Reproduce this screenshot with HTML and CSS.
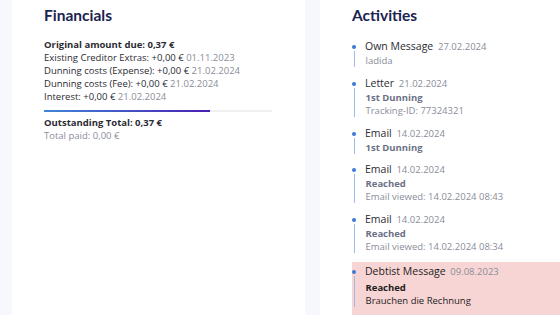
FILE: index.html
```html
<!DOCTYPE html>
<html lang="en">
<head>
    <meta charset="UTF-8">
    <title>Claim Overview</title>
    <link rel="stylesheet" href="styles.css">
</head>
<body>
    <div class="layout">
        <section class="card financials">
            <h2>Financials</h2>
            <div class="fin-list">
                <p class="strong">Original amount due: 0,37 €</p>
                <p>Existing Creditor Extras: +0,00 € <span class="date">01.11.2023</span></p>
                <p>Dunning costs (Expense): +0,00 € <span class="date">21.02.2024</span></p>
                <p>Dunning costs (Fee): +0,00 € <span class="date">21.02.2024</span></p>
                <p>Interest: +0,00 € <span class="date">21.02.2024</span></p>
            </div>
            <div class="progress"><div class="progress-bar" style="width: 73%"></div></div>
            <p class="strong">Outstanding Total: 0,37 €</p>
            <p class="muted">Total paid: 0,00 €</p>
        </section>
        <section class="card activities">
            <h2>Activities</h2>
            <ul class="timeline">
                <li class="item">
                    <div class="title">Own Message <span class="date">27.02.2024</span></div>
                    <div class="body">
                        <div class="sub">ladida</div>
                    </div>
                </li>
                <li class="item">
                    <div class="title">Letter <span class="date">21.02.2024</span></div>
                    <div class="body">
                        <div class="label">1st Dunning</div>
                        <div class="sub">Tracking-ID: 77324321</div>
                    </div>
                </li>
                <li class="item short">
                    <div class="title">Email <span class="date">14.02.2024</span></div>
                    <div class="body">
                        <div class="label">1st Dunning</div>
                    </div>
                </li>
                <li class="item">
                    <div class="title">Email <span class="date">14.02.2024</span></div>
                    <div class="body">
                        <div class="label">Reached</div>
                        <div class="sub">Email viewed: 14.02.2024 08:43</div>
                    </div>
                </li>
                <li class="item">
                    <div class="title">Email <span class="date">14.02.2024</span></div>
                    <div class="body">
                        <div class="label">Reached</div>
                        <div class="sub">Email viewed: 14.02.2024 08:34</div>
                    </div>
                </li>
                <li class="item highlight">
                    <div class="title">Debtist Message <span class="date">09.08.2023</span></div>
                    <div class="body">
                        <div class="label">Reached</div>
                        <div class="sub">Brauchen die Rechnung</div>
                    </div>
                </li>
            </ul>
        </section>
    </div>
</body>
</html>
```
FILE: styles.css
```css
body {
    margin: 0;
    padding: 0;
    background-color: #f6f8fc;
    font-family: "Open Sans", Arial, sans-serif;
    color: #2b2b33;
    overflow: hidden;
}
p {
    margin: 0;
}
.layout {
    display: grid;
    grid-template-columns: 293px 1fr;
    gap: 15px;
    padding-left: 12px;
    height: 315px;
}
.card {
    background-color: #fff;
    padding-left: 32px;
}
h2 {
    font-family: Lato, sans-serif;
    font-weight: 700;
    font-size: 15.5px;
    color: #1b2450;
    margin: 5px 0 13px;
    line-height: 20px;
}
.financials p {
    font-size: 9.5px;
    line-height: 13px;
}
.strong {
    font-weight: 700;
}
.date,
.muted {
    color: #8a8d99;
}
.progress {
    height: 2px;
    width: 228px;
    background-color: #f0f0f3;
    margin: 7px 0 4px;
}
.progress-bar {
    height: 100%;
    background: linear-gradient(90deg, #3f86d8, #4a1fb3);
}
.timeline {
    list-style: none;
    margin: 0;
    padding: 0;
    position: relative;
    top: 1px;
}
.item {
    position: relative;
    padding-bottom: 9px;
}
.item.short {
    padding-bottom: 8px;
}
.item::before {
    content: "";
    position: absolute;
    left: 0;
    top: 5.5px;
    width: 4px;
    height: 4px;
    border-radius: 50%;
    background-color: #3c7bd4;
}
.title {
    font-size: 10.5px;
    line-height: 15px;
    padding-left: 13px;
}
.title .date {
    font-size: 9.5px;
    margin-left: 2px;
}
/* line starts right under the dot */
.body {
    margin-left: 1.5px;
    margin-top: -3px;
    padding-top: 3px;
    border-left: 1px solid #9cbde8;
    padding-left: 11px;
}
.label {
    font-size: 9.5px;
    line-height: 13px;
    font-weight: 700;
    color: #6c7186;
}
.sub {
    font-size: 9.5px;
    line-height: 13px;
    color: #8a8d99;
}
.highlight {
    background-color: #f8d5d5;
    padding-top: 2px;
}
.highlight::before {
    top: 7.5px;
}
.highlight .body {
    padding-top: 5px;
}
.highlight .title,
.highlight .label,
.highlight .sub {
    color: #1e1e22;
}
```
